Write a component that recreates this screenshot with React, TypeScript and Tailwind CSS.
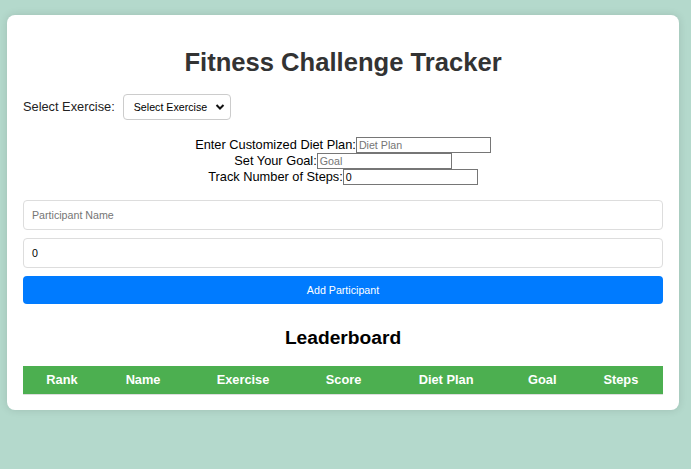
import React from "react";

export default function App() {
  const font = { fontFamily: '"Liberation Sans", Arial, sans-serif' };
  return (
    <div className="min-h-[469px] w-[691px] bg-[#b4d9cc] pt-[15px]" style={font}>
      <div className="ml-[7px] w-[672px] rounded-[8px] bg-white px-[16px] pb-[15px] pt-[16px] shadow-[0_0_8px_rgba(0,0,0,0.12)]">
        <h1 className="mt-[16px] text-center text-[25.6px] font-bold leading-[30px] text-[#333]">
          Fitness Challenge Tracker
        </h1>
        <div className="mt-[17px] flex items-center gap-[8px] text-[12.8px] text-[#222]">
          <span>Select Exercise:</span>
          <div className="flex h-[26px] w-[108px] items-center justify-between rounded-[4px] border border-[#ccc] pl-[10px] pr-[5px] text-[10.67px] text-black">
            <span>Select Exercise</span>
            <svg width="10" height="10" viewBox="0 0 10 10">
              <path d="M1.5 3 L5 6.5 L8.5 3" fill="none" stroke="#111" strokeWidth="2" />
            </svg>
          </div>
        </div>
        <div className="mt-[17px] flex flex-col items-center text-[12.8px] leading-[16px] text-black">
          <div className="flex items-center">
            <span>Enter Customized Diet Plan:</span>
            <div className="flex h-[16px] w-[135px] items-center border border-[#767676] pl-[2px] text-[10.67px] text-[#757575]">Diet Plan</div>
          </div>
          <div className="flex items-center">
            <span>Set Your Goal:</span>
            <div className="flex h-[16px] w-[135px] items-center border border-[#767676] pl-[2px] text-[10.67px] text-[#757575]">Goal</div>
          </div>
          <div className="flex items-center">
            <span>Track Number of Steps:</span>
            <div className="flex h-[16px] w-[135px] items-center border border-[#767676] pl-[2px] text-[10.67px] text-black">0</div>
          </div>
        </div>
        <div className="mt-[15px] flex flex-col gap-[8px]">
          <div className="flex h-[30px] items-center rounded-[4px] border border-[#ddd] px-[8px] text-[10.67px] text-[#757575]">
            Participant Name
          </div>
          <div className="flex h-[30px] items-center rounded-[4px] border border-[#ddd] px-[8px] text-[10.67px] text-black">
            0
          </div>
          <div className="flex h-[28px] items-center justify-center rounded-[4px] bg-[#007bff] text-[10.67px] text-white">
            Add Participant
          </div>
        </div>
        <h2 className="mt-[23px] text-center text-[19.2px] font-bold leading-[22px] text-black">Leaderboard</h2>
        <table className="mt-[17px] w-full border-collapse text-[12.8px]">
          <thead>
            <tr className="bg-[#4caf50] text-white">
              {["Rank", "Name", "Exercise", "Score", "Diet Plan", "Goal", "Steps"].map((h) => (
                <th key={h} className="border-b border-[#ddd] px-[6.4px] py-[6.4px] text-center font-bold leading-[15px]">
                  {h}
                </th>
              ))}
            </tr>
          </thead>
        </table>
      </div>
    </div>
  );
}
